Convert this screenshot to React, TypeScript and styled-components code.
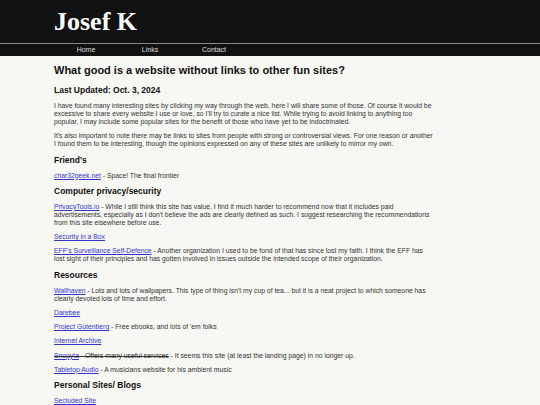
import styled, { createGlobalStyle } from "styled-components";

const Global = createGlobalStyle`
  html, body {
    margin: 0;
    padding: 0;
    background: #f7f7f3;
  }
  body {
    font-family: "Liberation Sans", Arial, sans-serif;
    color: #333;
  }
`;

const Header = styled.header`
  background: #111;
`;
const Brand = styled.div`
  width: 80%;
  margin: 0 auto;
  height: 43px;
  display: flex;
  align-items: center;
`;
const Title = styled.h1`
  margin: 0;
  font-family: "Liberation Serif", "Times New Roman", serif;
  font-size: 26px;
  font-weight: bold;
  color: #fff;
`;
const Nav = styled.nav`
  border-top: 1px solid #888;
  background: #111;
`;
const NavList = styled.ul`
  width: 80%;
  margin: 0 auto;
  padding: 0;
  list-style: none;
  display: flex;
`;
const NavItem = styled.li`
  width: 64px;
  text-align: center;
  font-size: 7px;
  line-height: 12px;
  color: #ddd;
`;

const Main = styled.main`
  width: 80%;
  margin: 0 auto;
  padding: 7px 0 0;
  font-size: 6.8px;
  line-height: 8px;
`;
const Heading = styled.h2`
  margin: 0 0 8px;
  font-size: 11px;
  line-height: 14px;
  color: #111;
`;
const Sub = styled.h3<{ $gap?: number }>`
  margin: ${(p) => p.$gap ?? 4}px 0 6px;
  font-size: 8.5px;
  line-height: 11px;
  color: #111;
`;
const P = styled.p`
  max-width: 380px;
  margin: 0 0 6.25px;
`;
const Lead = styled(P)`
  margin-top: 2px;
`;
const A = styled.a`
  color: #3535cc;
  text-decoration: underline;
`;

export default function App() {
  return (
    <>
      <Global />
      <Header>
        <Brand>
          <Title>Josef K</Title>
        </Brand>
        <Nav>
          <NavList>
            <NavItem>Home</NavItem>
            <NavItem>Links</NavItem>
            <NavItem>Contact</NavItem>
          </NavList>
        </Nav>
      </Header>
      <Main>
        <Heading>What good is a website without links to other fun sites?</Heading>
        <Sub $gap={0}>Last Updated: Oct. 3, 2024</Sub>
        <Lead>
          I have found many interesting sites by clicking my way through the web, here I will
          share some of those. Of course it would be excessive to share every website I use or
          love, so I'll try to curate a nice list. While trying to avoid linking to anything too
          popular, I may include some popular sites for the benefit of those who have yet to be
          indoctrinated.
        </Lead>
        <P>
          It's also important to note there may be links to sites from people with strong or
          controversial views. For one reason or another I found them to be interesting, though
          the opinions expressed on any of these sites are unlikely to mirror my own.
        </P>
        <Sub>Friend's</Sub>
        <P>
          <A href="#">char32geek.net</A> - Space! The final frontier
        </P>
        <Sub>Computer privacy/security</Sub>
        <P>
          <A href="#">PrivacyTools.io</A> - While I still think this site has value, I find it
          much harder to recommend now that it includes paid advertisements, especially as I
          don't believe the ads are clearly defined as such. I suggest researching the
          recommendations from this site elsewhere before use.
        </P>
        <P>
          <A href="#">Security in a Box</A>
        </P>
        <P>
          <A href="#">EFF's Surveillance Self-Defence</A> - Another organization I used to be fond
          of that has since lost my faith. I think the EFF has lost sight of their principles and
          has gotten involved in issues outside the intended scope of their organization.
        </P>
        <Sub>Resources</Sub>
        <P>
          <A href="#">Wallhaven</A> - Lots and lots of wallpapers. This type of thing isn't my cup
          of tea... but it is a neat project to which someone has clearly devoted lots of time and
          effort.
        </P>
        <P>
          <A href="#">Darebee</A>
        </P>
        <P>
          <A href="#">Project Gutenberg</A> - Free ebooks, and lots of 'em folks
        </P>
        <P>
          <A href="#">Internet Archive</A>
        </P>
        <P>
          <del>
            <A href="#">Snopyta</A> - Offers many useful services
          </del>{" "}
          - It seems this site (at least the landing page) in no longer up.
        </P>
        <P>
          <A href="#">Tabletop Audio</A> - A musicians website for his ambient music
        </P>
        <Sub>Personal Sites/ Blogs</Sub>
        <P>
          <A href="#">Secluded Site</A>
        </P>
      </Main>
    </>
  );
}
